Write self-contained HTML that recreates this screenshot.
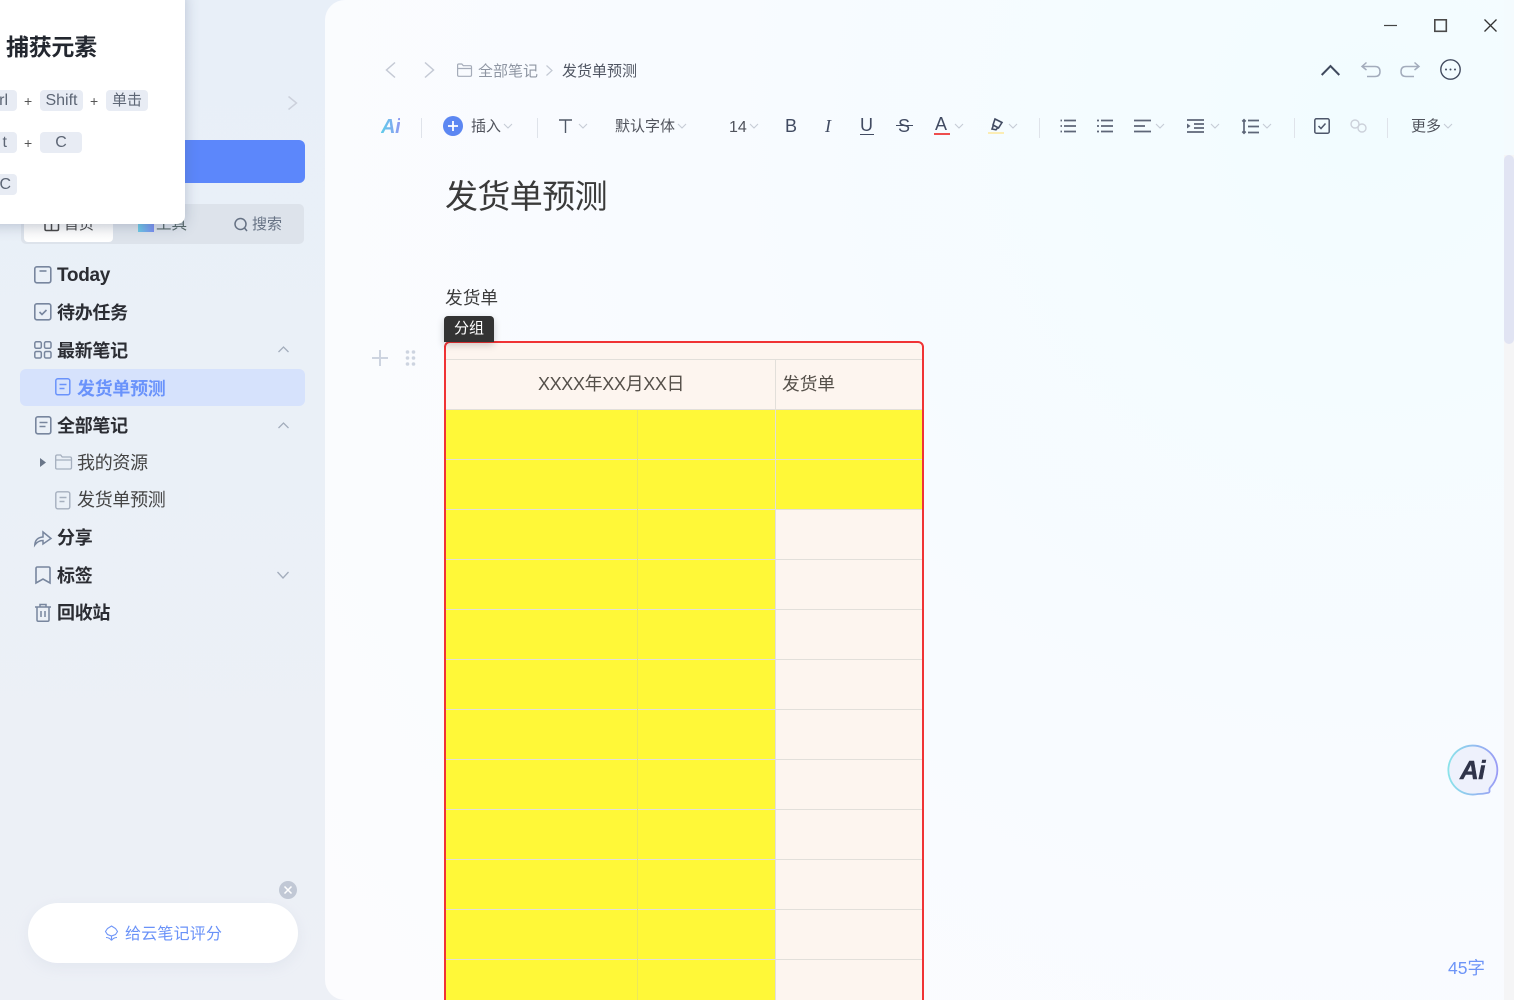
<!DOCTYPE html>
<html lang="zh"><head><meta charset="utf-8"><style>
*{box-sizing:border-box}
html,body{margin:0;width:1514px;height:1000px;overflow:hidden}
body{position:relative;font-family:"Liberation Sans","Noto Sans CJK SC",sans-serif;background:linear-gradient(180deg,#e8eff8 0,#eaf0f7 400px,#edf0f6 1000px);color:#333}
.a{position:absolute;white-space:nowrap}
svg{position:absolute;overflow:visible;fill:none}
.t{font-size:18px;line-height:26px;font-weight:700;color:#2b2d33;left:57px;letter-spacing:-.3px}
.s{font-size:18px;line-height:26px;left:77px;color:#444;letter-spacing:-.3px}
.k{position:absolute;height:21px;background:#e8ecf4;border-radius:4px;font-size:16px;line-height:22px;text-align:center;color:#5d6675}
.p{position:absolute;font-size:14px;color:#555;line-height:20px}
.tb{font-size:15px;line-height:20px;color:#50535c}
.hl{position:absolute;left:446px;width:476px;height:1px;background:#e2dfda}
</style></head><body>
<div class="a" style="left:325px;top:0;width:1189px;height:1000px;border-radius:20px 0 0 20px;background:radial-gradient(circle at 88% 12%,#f2fcff 0,#f8fbff 50%,#fcfcfe 100%)"></div>
<div class="a" style="left:1504px;top:0;width:10px;height:1000px;background:#f5f5f6"></div>
<div class="a" style="left:1504px;top:0;width:10px;height:155px;background:#f4fbfe"></div>
<div class="a" style="left:1504px;top:155px;width:10px;height:189px;background:#e1e4f3;border-radius:5px"></div>

<!-- sidebar -->
<svg style="left:287px;top:96px" width="12" height="14" stroke="#ccd1dc" stroke-width="1.5"><path d="M1.5 .5L9.500 7 1.500 13.500"/></svg>
<div class="a" style="left:60px;top:140px;width:245px;height:43px;background:#5c87fb;border-radius:6px"></div>
<div class="a" style="left:21px;top:204px;width:283px;height:40px;background:#dde3eb;border-radius:5px"></div>
<div class="a" style="left:24px;top:207px;width:89px;height:35px;background:linear-gradient(#f2f2f2,#fff);border-radius:4px"></div>
<svg style="left:44px;top:218px" width="16" height="14" stroke="#444" stroke-width="1.500"><path d="M1 0v11q0 1.500 1.500 1.500h10.500q1.500 0 1.500-1.500V0M7.500 6v6"/></svg>
<div class="a" style="left:64px;top:215px;font-size:15px;line-height:20px;color:#444">首页</div>
<div class="a" style="left:156px;top:215px;font-size:15.500px;line-height:20px;color:#566">工具</div>
<div class="a" style="left:138px;top:224px;width:16px;height:8px;background:linear-gradient(90deg,#6ccbe6,#7a8df0)"></div>
<svg style="left:234px;top:217px" width="14" height="15" stroke="#667284" stroke-width="1.5"><circle cx="6.500" cy="7" r="5.500"/><path d="M10.500 11l2.500 3"/></svg>
<div class="a" style="left:252px;top:215px;font-size:15px;line-height:20px;color:#667284">搜索</div>

<!-- tree icons -->
<svg style="left:34px;top:266px" width="18" height="18" stroke="#78869e" stroke-width="1.600"><rect x=".8" y=".8" width="16" height="16" rx="2"/><path d="M5.500 5h7"/></svg>
<div class="a t" style="top:263px;font-size:19px;letter-spacing:-.3px">Today</div>
<svg style="left:34px;top:303px" width="18" height="18" stroke="#78869e" stroke-width="1.600"><rect x=".8" y=".8" width="16" height="16" rx="2"/><path d="M5.500 9l2.500 2.500L12.500 7"/></svg>
<div class="a t" style="top:300px">待办任务</div>
<svg style="left:34px;top:341px" width="18" height="18" stroke="#78869e" stroke-width="1.500"><rect x=".8" y=".8" width="6.500" height="6.500" rx="1.500"/><rect x="10.500" y=".8" width="6.500" height="6.500" rx="1.500"/><rect x=".8" y="10.500" width="6.500" height="6.500" rx="1.500"/><rect x="10.500" y="10.500" width="6.500" height="6.500" rx="1.500"/></svg>
<div class="a t" style="top:338px">最新笔记</div>
<svg style="left:278px;top:346px" width="11" height="7" stroke="#a3adbc" stroke-width="1.300"><path d="M.5 6L5.500 1l5 5"/></svg>
<div class="a" style="left:20px;top:369px;width:285px;height:37px;background:#d6e2fc;border-radius:6px"></div>
<svg style="left:55px;top:378px" width="16" height="18" stroke="#6a93fb" stroke-width="1.500"><rect x=".8" y=".8" width="14" height="16" rx="2"/><path d="M4.500 6.500h7M4.500 10.500h5"/></svg>
<div class="a t" style="left:77px;top:376px;color:#6a93fb">发货单预测</div>
<svg style="left:35px;top:416px" width="17" height="18" stroke="#78869e" stroke-width="1.600"><rect x=".8" y=".8" width="15" height="17" rx="2"/><path d="M4.500 6.500h8M4.500 10.500h6"/></svg>
<div class="a t" style="top:413px">全部笔记</div>
<svg style="left:278px;top:422px" width="11" height="7" stroke="#a3adbc" stroke-width="1.300"><path d="M.5 6L5.500 1l5 5"/></svg>
<svg style="left:40px;top:458px" width="6" height="9"><path d="M0 0l6 4.500L0 9z" fill="#6a7689"/></svg>
<svg style="left:55px;top:454px" width="17" height="16" stroke="#a5afbe" stroke-width="1.300"><path d="M.7 14V2.500q0-1.500 1.500-1.500h3.500l1.500 2h7.800q1.500 0 1.500 1.500V13.500q0 1.500-1.500 1.500H2q-1.300 0-1.300-1zM.7 6h15.600"/></svg>
<div class="a s" style="top:450px">我的资源</div>
<svg style="left:55px;top:491px" width="16" height="18" stroke="#a5afbe" stroke-width="1.400"><rect x=".8" y=".8" width="14" height="17" rx="2"/><path d="M4.500 6.500h7M4.500 10.500h5"/></svg>
<div class="a s" style="top:487px">发货单预测</div>
<svg style="left:34px;top:530px" width="18" height="16" stroke="#78869e" stroke-width="1.500"><path d="M.8 15q.5-7.500 8.200-8V2l8 6.500-8 5.500v-3.500Q4 10.500.8 15z"/></svg>
<div class="a t" style="top:525px">分享</div>
<svg style="left:35px;top:566px" width="16" height="18" stroke="#78869e" stroke-width="1.600"><path d="M1 2.500Q1 1 2.500 1h11Q15 1 15 2.500V17l-7-4-7 4z"/></svg>
<div class="a t" style="top:563px">标签</div>
<svg style="left:277px;top:571px" width="12" height="8" stroke="#a3adbc" stroke-width="1.300"><path d="M.5 1l5.500 6 5.500-6"/></svg>
<svg style="left:35px;top:603px" width="16" height="19" stroke="#78869e" stroke-width="1.500"><path d="M0 4h16M5 4V1.500h6V4M2 4v13q0 1.300 1.300 1.300h9.400Q14 18.300 14 17V4M6 8v6M10 8v6"/></svg>
<div class="a t" style="top:600px">回收站</div>

<!-- popup -->
<div class="a" style="left:-20px;top:-10px;width:205px;height:234px;background:#fff;border-radius:8px;box-shadow:0 2px 14px rgba(70,85,120,.3)"></div>
<div class="a" style="left:6px;top:32px;font-size:23px;line-height:30px;font-weight:700;color:#23272f;letter-spacing:-.3px">捕获元素</div>
<div class="k" style="left:-20px;top:90px;width:37px;text-align:right;padding-right:9px">rl</div>
<div class="p" style="left:24px;top:91px">+</div>
<div class="k" style="left:40px;top:90px;width:43px">Shift</div>
<div class="p" style="left:90px;top:91px">+</div>
<div class="k" style="left:106px;top:90px;width:42px;font-size:15px">单击</div>
<div class="k" style="left:-20px;top:132px;width:37px;text-align:right;padding-right:10px">t</div>
<div class="p" style="left:24px;top:133px">+</div>
<div class="k" style="left:40px;top:132px;width:42px">C</div>
<div class="k" style="left:-20px;top:174px;width:37px;text-align:right;padding-right:6px">C</div>

<!-- rate -->
<div class="a" style="left:28px;top:903px;width:270px;height:60px;background:#fff;border-radius:30px;box-shadow:0 4px 14px rgba(180,190,210,.18)"></div>
<svg style="left:104px;top:925px" width="15" height="16" stroke="#6f95f7" stroke-width="1.100"><path d="M7.500 1l4 2.500 2 3-2 3-4 1.500-4-1.500-2-3 2-3zM7.500 11v4.500M2 12.500q3.500 0 5.500 3M13 12.500q-3.500 0-5.500 3"/></svg>
<div class="a" style="left:125px;top:924px;font-size:16px;line-height:22px;color:#6a92f8;letter-spacing:.2px">给云笔记评分</div>
<div class="a" style="left:279px;top:881px;width:18px;height:18px;border-radius:50%;background:#c1c8d5"></div>
<svg style="left:284px;top:886px" width="8" height="8" stroke="#fff" stroke-width="1.500"><path d="M.5.5l7 7M7.500.5l-7 7"/></svg>

<!-- window controls -->
<svg style="left:1384px;top:25px" width="13" height="2" stroke="#444"><path d="M0 .5h13" stroke-width="1.200"/></svg>
<svg style="left:1434px;top:19px" width="13" height="13" stroke="#4a4a4a" stroke-width="1.600"><rect x=".8" y=".8" width="11.500" height="11.500"/></svg>
<svg style="left:1484px;top:19px" width="13" height="13" stroke="#333" stroke-width="1.300"><path d="M.5.500l12 12M12.500.500l-12 12"/></svg>

<!-- breadcrumb -->
<svg style="left:385px;top:62px" width="11" height="16" stroke="#c4c9d4" stroke-width="1.500"><path d="M10 .5L1.500 8l8.500 7.500"/></svg>
<svg style="left:424px;top:62px" width="11" height="16" stroke="#c4c9d4" stroke-width="1.500"><path d="M1 .5L9.500 8 1 15.500"/></svg>
<svg style="left:457px;top:63px" width="15" height="14" stroke="#a5acb9" stroke-width="1.200"><path d="M.6 12V2Q.6 1 1.800 1h3l1.500 1.700h7Q14.500 2.700 14.500 4v8q0 1.300-1.200 1.300H1.800Q.6 13.300.6 12zM.6 5.500h13.900"/></svg>
<div class="a" style="left:478px;top:61px;font-size:15px;line-height:21px;color:#8f96a3">全部笔记</div>
<svg style="left:546px;top:65px" width="7" height="11" stroke="#c4c9d4" stroke-width="1.200"><path d="M.5.500L6 5.500.5 10.500"/></svg>
<div class="a" style="left:562px;top:61px;font-size:15px;line-height:21px;color:#4f5562">发货单预测</div>
<svg style="left:1321px;top:64px" width="19" height="12" stroke="#404a5e" stroke-width="2"><path d="M.7 11L9.500 2l8.800 9"/></svg>
<svg style="left:1361px;top:62px" width="20" height="16" stroke="#a3acbc" stroke-width="1.500"><path d="M5.500.5L1 4.500l4.500 3.500M1.500 4.500H14q5 0 5 5t-5 5H6"/></svg>
<svg style="left:1400px;top:62px" width="20" height="16" stroke="#a3acbc" stroke-width="1.500"><path d="M14.500.5L19 4.500 14.500 8M18.500 4.500H6q-5 0-5 5t5 5h8"/></svg>
<svg style="left:1440px;top:59px" width="21" height="21" stroke="#424b5f" stroke-width="1.400"><circle cx="10.500" cy="10.500" r="9.700"/><circle cx="6" cy="10.500" r="1" fill="#424b5f" stroke="none"/><circle cx="10.500" cy="10.500" r="1" fill="#424b5f" stroke="none"/><circle cx="15" cy="10.500" r="1" fill="#424b5f" stroke="none"/></svg>

<!-- toolbar -->
<div class="a" style="left:381px;top:115px;font-size:20px;line-height:24px;font-weight:700;font-style:italic;letter-spacing:-.3px;background:linear-gradient(90deg,#5fcdea,#8f9af2);-webkit-background-clip:text;background-clip:text;color:transparent">Ai</div>
<div class="a" style="left:421px;top:118px;width:1px;height:20px;background:#dfe3ea"></div>
<div class="a" style="left:443px;top:116px;width:20px;height:20px;border-radius:50%;background:#5c87f2"></div>
<svg style="left:448px;top:121px" width="10" height="10" stroke="#fff" stroke-width="1.800"><path d="M5 0v10M0 5h10"/></svg>
<div class="a tb" style="left:471px;top:117px">插入</div>
<div class="a" style="left:537px;top:118px;width:1px;height:20px;background:#dfe3ea"></div>
<svg style="left:559px;top:119px" width="13" height="14" stroke="#505867" stroke-width="1.400"><path d="M0 1h13M6.500 1v13"/></svg>
<div class="a tb" style="left:615px;top:117px">默认字体</div>
<div class="a tb" style="left:729px;top:118px;font-size:16px">14</div>
<div class="a" style="left:785px;top:115px;font-size:18px;line-height:22px;color:#414b62">B</div>
<div class="a" style="left:825px;top:115px;font-size:18px;line-height:22px;color:#414b62;font-style:italic;font-family:'Liberation Serif',serif">I</div>
<div class="a" style="left:860px;top:114px;font-size:18px;line-height:22px;color:#414b62">U</div>
<div class="a" style="left:860px;top:134px;width:14px;height:1px;background:#414b62"></div>
<div class="a" style="left:898px;top:115px;font-size:18px;line-height:22px;color:#414b62">S</div>
<div class="a" style="left:896px;top:125px;width:17px;height:1px;background:#414b62"></div>
<div class="a" style="left:935px;top:113px;font-size:18px;line-height:22px;color:#414b62">A</div>
<div class="a" style="left:934px;top:133px;width:16px;height:2px;background:#ee4e4e"></div>
<svg style="left:990px;top:118px" width="13" height="13" stroke="#414b62" stroke-width="1.600"><path d="M5 1l7 3.500-3.500 5.500-5.500-3zM3.500 7L2 11l4 .8L7.500 10"/></svg>
<div class="a" style="left:988px;top:132px;width:16px;height:2px;background:#fbedb5"></div>
<div class="a" style="left:1039px;top:118px;width:1px;height:20px;background:#dfe3ea"></div>
<svg style="left:1060px;top:119px" width="16" height="14" stroke="#5d6678" stroke-width="1.700"><path d="M4 1.500h12M4 7h12M4 12.500h12M.5 1.500h1.500M.5 7h1.500M.5 12.500h1.500"/></svg>
<svg style="left:1097px;top:119px" width="16" height="14" stroke="#5d6678" stroke-width="1.700"><path d="M4 1.500h12M4 7h12M4 12.500h12M0 1.500h2M0 7h2M0 12.500h2"/></svg>
<svg style="left:1134px;top:119px" width="17" height="14" stroke="#5d6678" stroke-width="1.800"><path d="M0 1.500h17M0 7h11M0 12.500h17"/></svg>
<svg style="left:1187px;top:119px" width="17" height="14" stroke="#5d6678" stroke-width="1.700"><path d="M0 1h17M7 5h10M7 9h10M0 13h17"/><path d="M0 4.500L3.500 7 0 9.500z" fill="#5d6678" stroke="none"/></svg>
<svg style="left:1242px;top:119px" width="17" height="15" stroke="#5d6678" stroke-width="1.700"><path d="M6 1.500h11M6 7.500h11M6 13.500h11M2 1v13M.3 2.500L2 .8l1.700 1.700M.3 12.500L2 14.200l1.700-1.700"/></svg>
<div class="a" style="left:1294px;top:118px;width:1px;height:20px;background:#dfe3ea"></div>
<svg style="left:1314px;top:118px" width="16" height="16" stroke="#4d566a" stroke-width="1.500"><rect x=".8" y=".8" width="14.400" height="14.400" rx="1.500"/><path d="M4.500 8l2.500 2.500 4.500-5"/></svg>
<svg style="left:1350px;top:119px" width="18" height="14" stroke="#ccd1da" stroke-width="1.400"><circle cx="5" cy="5" r="4"/><circle cx="12" cy="9" r="4"/></svg>
<div class="a" style="left:1387px;top:118px;width:1px;height:20px;background:#dfe3ea"></div>
<div class="a tb" style="left:1411px;top:117px">更多</div>
<svg style="left:0;top:0" width="1514" height="140" stroke="#c6ccd6" stroke-width="1.100"><path d="M504 124l4 4 4-4M579 124l4 4 4-4M678 124l4 4 4-4M750 124l4 4 4-4M955 124l4 4 4-4M1009 124l4 4 4-4M1156 124l4 4 4-4M1211 124l4 4 4-4M1263 124l4 4 4-4M1444 124l4 4 4-4"/></svg>

<!-- doc -->
<div class="a" style="left:445px;top:175px;font-size:33px;line-height:44px;color:#3a3a3a;letter-spacing:-.6px">发货单预测</div>
<div class="a" style="left:445px;top:286px;font-size:17.700px;line-height:25px;color:#3c3c3c">发货单</div>
<svg style="left:372px;top:350px" width="16" height="16" stroke="#cdd4e0" stroke-width="2"><path d="M8 0v16M0 8h16"/></svg>
<svg style="left:405px;top:350px" width="11" height="16"><circle cx="2.500" cy="2" r="1.800" fill="#cdd4e0"/><circle cx="8.500" cy="2" r="1.800" fill="#cdd4e0"/><circle cx="2.500" cy="8" r="1.800" fill="#cdd4e0"/><circle cx="8.500" cy="8" r="1.800" fill="#cdd4e0"/><circle cx="2.500" cy="14" r="1.800" fill="#cdd4e0"/><circle cx="8.500" cy="14" r="1.800" fill="#cdd4e0"/></svg>

<!-- table -->
<div class="a" style="left:444px;top:341px;width:480px;height:680px;background:#fdf5ef;border:2px solid #f03335;border-radius:6px 6px 0 0"></div>
<div class="a" style="left:446px;top:410px;width:192px;height:590px;background:#fff838"></div>
<div class="a" style="left:638px;top:410px;width:138px;height:590px;background:#fff838"></div>
<div class="a" style="left:776px;top:410px;width:146px;height:100px;background:#fff838"></div>
<div class="hl" style="top:359px"></div><div class="hl" style="top:409px"></div><div class="hl" style="top:459px"></div><div class="hl" style="top:509px"></div><div class="hl" style="top:559px"></div><div class="hl" style="top:609px"></div><div class="hl" style="top:659px"></div><div class="hl" style="top:709px"></div><div class="hl" style="top:759px"></div><div class="hl" style="top:809px"></div><div class="hl" style="top:859px"></div><div class="hl" style="top:909px"></div><div class="hl" style="top:959px"></div>
<div class="a" style="left:637px;top:410px;width:1px;height:590px;background:#ece85a"></div>
<div class="a" style="left:775px;top:360px;width:1px;height:640px;background:#e2dfda"></div>
<div class="a" style="left:538px;top:372px;font-size:18px;line-height:25px;color:#55504a;letter-spacing:-.35px">XXXX年XX月XX日</div>
<div class="a" style="left:782px;top:372px;font-size:17.700px;line-height:25px;color:#55504a">发货单</div>
<div class="a" style="left:444px;top:316px;width:50px;height:26px;background:#333;border-radius:4px 4px 0 0;box-shadow:0 3px 8px rgba(0,0,0,.2);color:#fff;font-size:15px;line-height:25px;text-align:center">分组</div>

<!-- Ai bubble -->
<svg style="left:1448px;top:745px" width="50" height="50"><defs><linearGradient id="g" x1="0" x2="1"><stop offset="0" stop-color="#8be3ea"/><stop offset="1" stop-color="#9a9cf5"/></linearGradient></defs><path d="M30 49A24.500 24.500 0 1 1 43 41.500Q41 43.500 41.500 45.500Q42 48 39 48Q35 49 30 49z" fill="#eef1fc" stroke="url(#g)" stroke-width="1.800"/></svg>
<div class="a" style="left:1460px;top:755px;font-size:26px;line-height:30px;font-weight:700;font-style:italic;color:#30344a;letter-spacing:-.5px;-webkit-text-stroke:.5px #30344a">Ai</div>
<div class="a" style="left:1448px;top:957px;font-size:17.500px;line-height:22px;color:#6d94f7">45字</div>
</body></html>
